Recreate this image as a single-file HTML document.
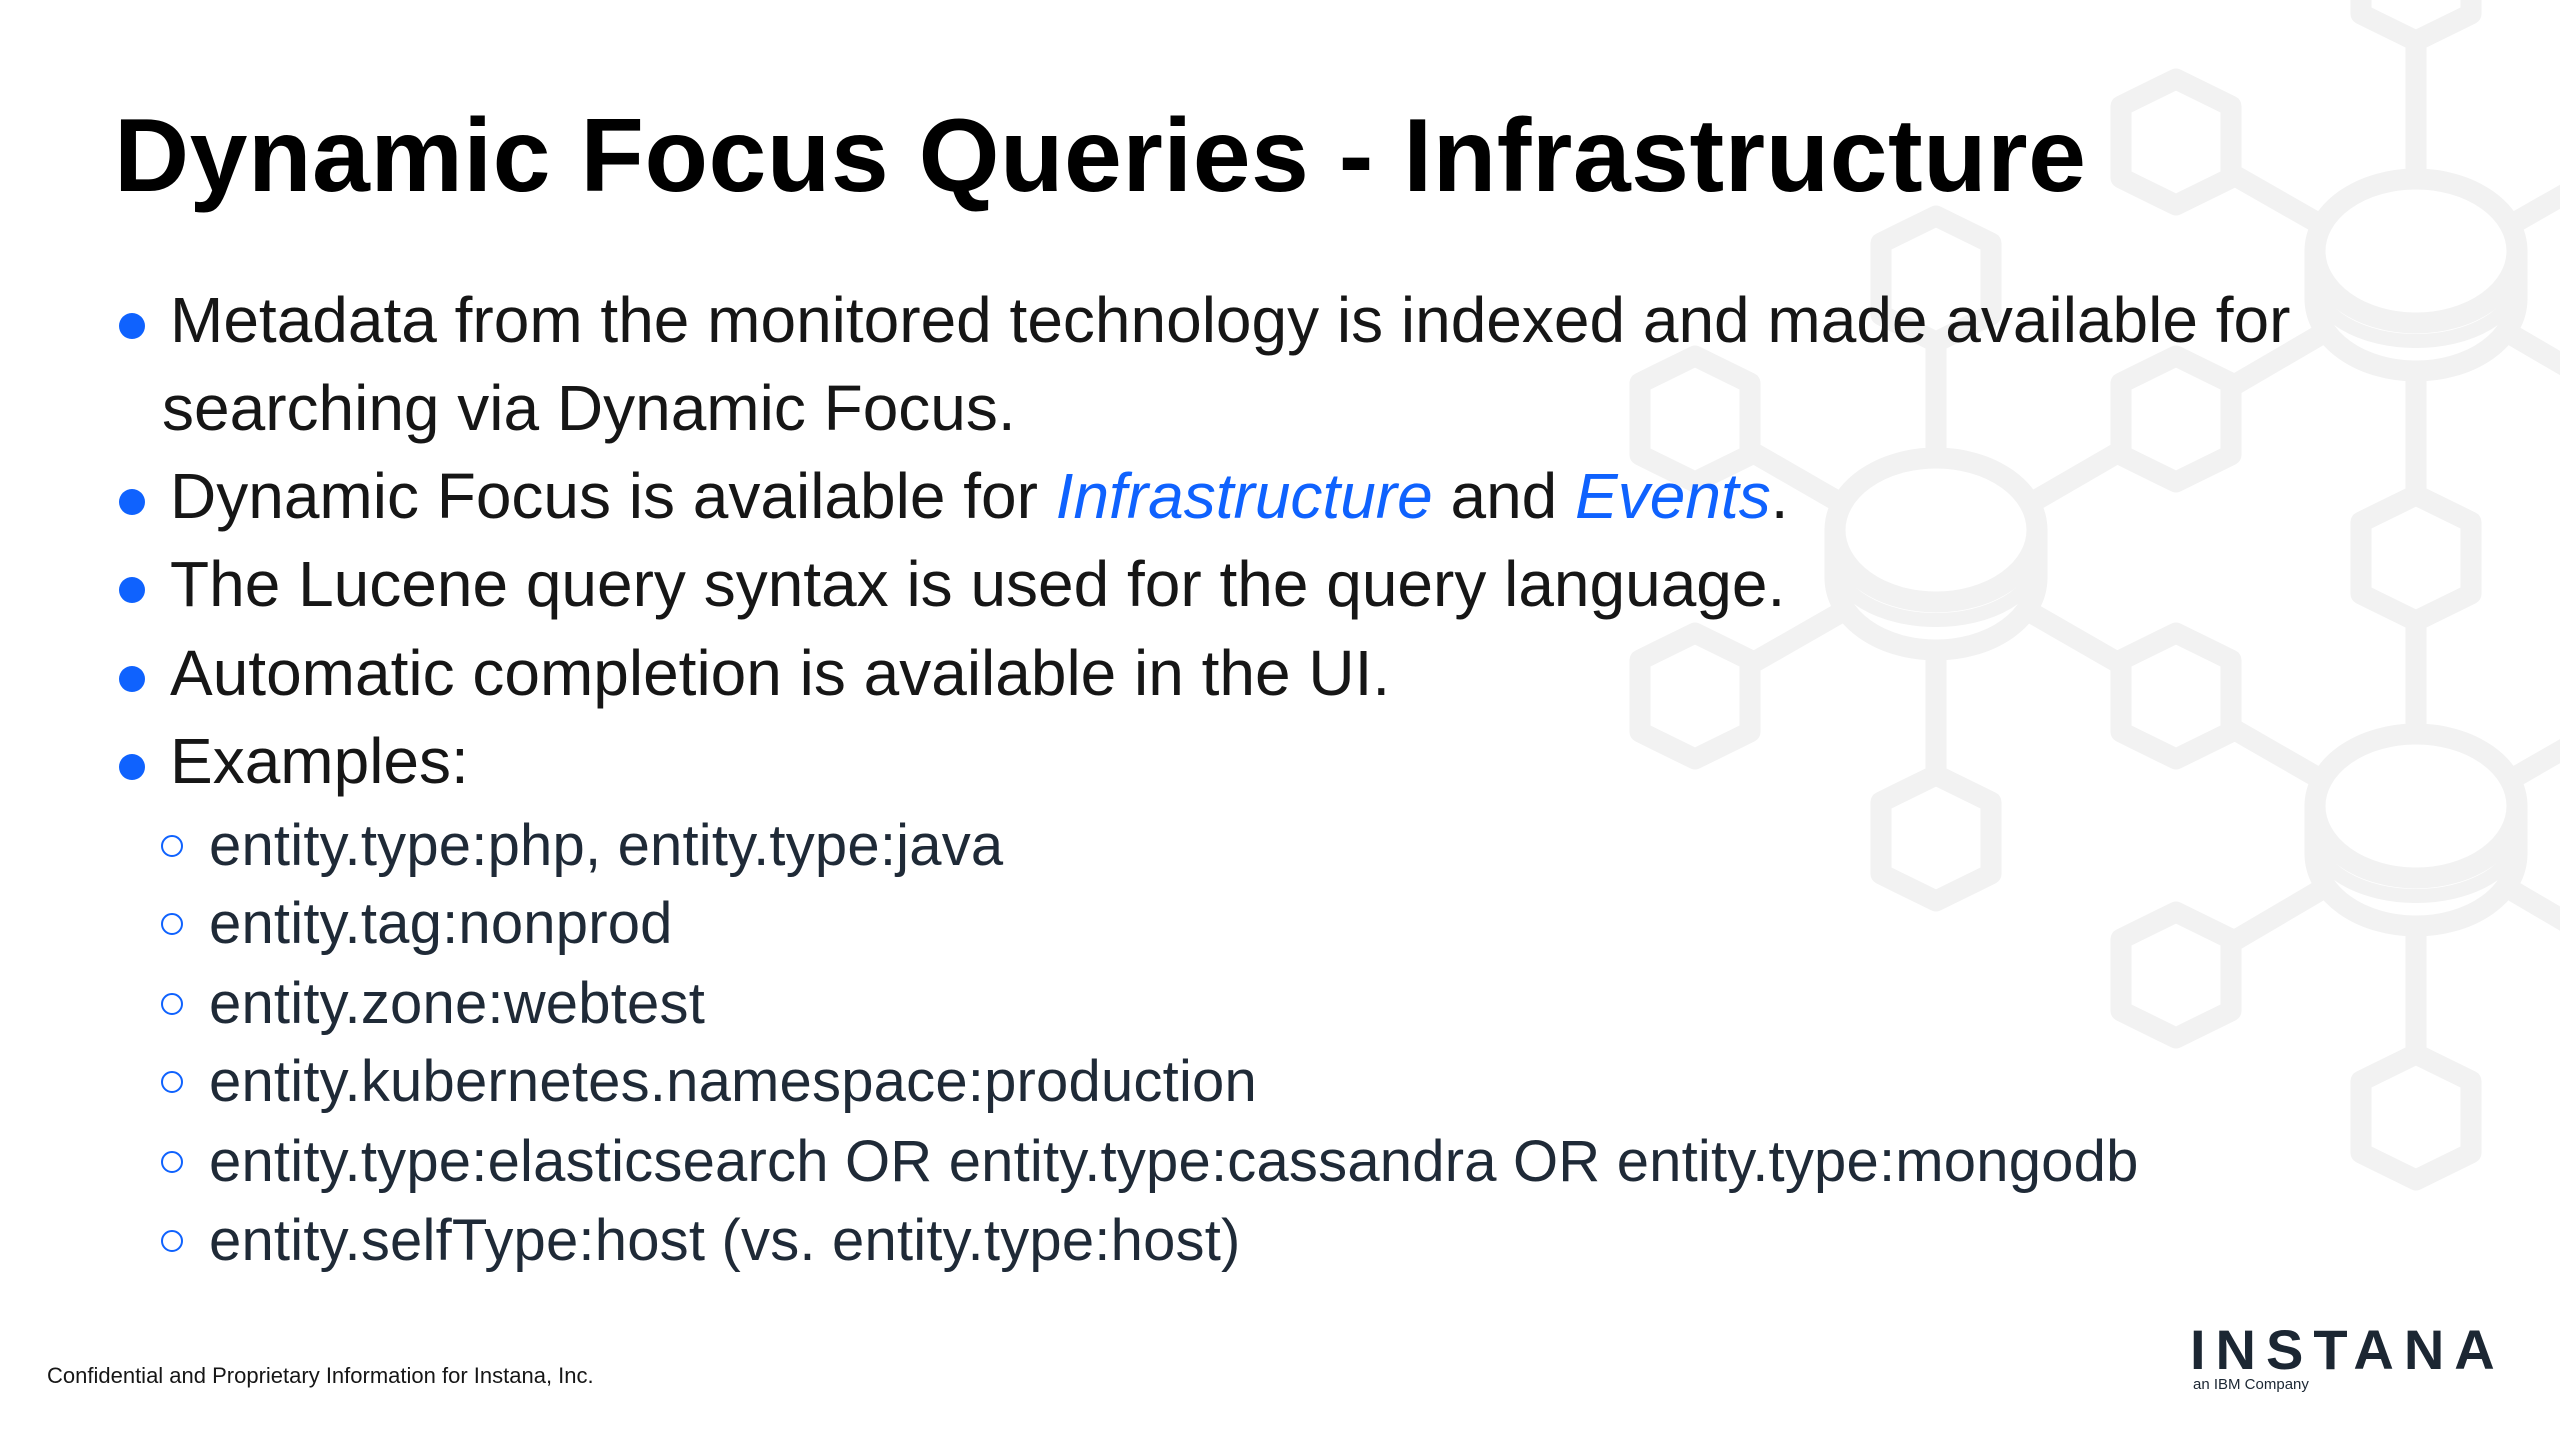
<!DOCTYPE html>
<html><head><meta charset="utf-8"><style>
html,body{margin:0;padding:0;}
body{width:2560px;height:1440px;position:relative;overflow:hidden;background:#fff;font-family:"Liberation Sans",sans-serif;}
.l{position:absolute;line-height:1;white-space:nowrap;}
.t{font-size:104px;font-weight:bold;color:#000;left:114px;top:104px;letter-spacing:0.5px}
.b{font-size:64px;color:#161616;left:170px}
.s{font-size:58px;color:#1f2a37;left:209px;letter-spacing:0.2px}
.dot{position:absolute;width:26px;height:26px;border-radius:50%;background:#0f62fe;left:119px}
.ring{position:absolute;width:18px;height:18px;border-radius:50%;border:2.5px solid #0f62fe;left:161px}
em{color:#0f62fe}
</style></head><body>
<svg style="position:absolute;left:0;top:0" width="2560" height="1440">
<g stroke="#f2f2f2" stroke-width="21" fill="#fff" stroke-linejoin="round" stroke-linecap="round">
<g fill="none">
<line x1="1936" y1="558" x2="1936" y2="279"/><line x1="1936" y1="558" x2="1936" y2="838"/>
<line x1="1936" y1="558" x2="1695" y2="419"/><line x1="1936" y1="558" x2="1695" y2="696"/>
<line x1="1936" y1="558" x2="2176" y2="419"/><line x1="1936" y1="558" x2="2176" y2="696"/>
<line x1="2416" y1="279" x2="2416" y2="11"/><line x1="2416" y1="279" x2="2416" y2="558"/>
<line x1="2416" y1="279" x2="2176" y2="142"/><line x1="2416" y1="279" x2="2176" y2="419"/>
<line x1="2416" y1="279" x2="2656" y2="142"/><line x1="2416" y1="279" x2="2656" y2="419"/>
<line x1="2416" y1="834" x2="2416" y2="558"/><line x1="2416" y1="834" x2="2416" y2="1117"/>
<line x1="2416" y1="834" x2="2176" y2="696"/><line x1="2416" y1="834" x2="2176" y2="975"/>
<line x1="2416" y1="834" x2="2656" y2="696"/><line x1="2416" y1="834" x2="2656" y2="975"/>
</g>
<polygon points="0,-63 55,-36 55,36 0,63 -55,36 -55,-36" transform="translate(2176,142)"/>
<polygon points="0,-63 55,-36 55,36 0,63 -55,36 -55,-36" transform="translate(1936,279)"/>
<polygon points="0,-63 55,-36 55,36 0,63 -55,36 -55,-36" transform="translate(1695,419)"/>
<polygon points="0,-63 55,-36 55,36 0,63 -55,36 -55,-36" transform="translate(2176,419)"/>
<polygon points="0,-63 55,-36 55,36 0,63 -55,36 -55,-36" transform="translate(2416,558)"/>
<polygon points="0,-63 55,-36 55,36 0,63 -55,36 -55,-36" transform="translate(1695,696)"/>
<polygon points="0,-63 55,-36 55,36 0,63 -55,36 -55,-36" transform="translate(2176,696)"/>
<polygon points="0,-63 55,-36 55,36 0,63 -55,36 -55,-36" transform="translate(1936,838)"/>
<polygon points="0,-63 55,-36 55,36 0,63 -55,36 -55,-36" transform="translate(2176,975)"/>
<polygon points="0,-63 55,-36 55,36 0,63 -55,36 -55,-36" transform="translate(2416,1117)"/>
<polygon points="0,-63 55,-36 55,36 0,63 -55,36 -55,-36" transform="translate(2416,-22)"/>
<g transform="translate(1936,530)">
<path d="M-101,0 L-101,48 A101,72 0 0 0 101,48 L101,0 Z"/>
<path d="M-101,30 A101,60 0 0 0 101,30" fill="none" stroke-width="14"/>
<ellipse cx="0" cy="0" rx="101" ry="72"/>
</g>
<g transform="translate(2416,251)">
<path d="M-101,0 L-101,48 A101,72 0 0 0 101,48 L101,0 Z"/>
<path d="M-101,30 A101,60 0 0 0 101,30" fill="none" stroke-width="14"/>
<ellipse cx="0" cy="0" rx="101" ry="72"/>
</g>
<g transform="translate(2416,806)">
<path d="M-101,0 L-101,48 A101,72 0 0 0 101,48 L101,0 Z"/>
<path d="M-101,30 A101,60 0 0 0 101,30" fill="none" stroke-width="14"/>
<ellipse cx="0" cy="0" rx="101" ry="72"/>
</g>
</g>
</svg>

<div class="l t">Dynamic Focus Queries - Infrastructure</div>

<div class="dot" style="top:313px"></div>
<div class="l b" style="top:288px">Metadata from the monitored technology is indexed and made available for</div>
<div class="l b" style="top:376px;left:162px">searching via Dynamic Focus.</div>
<div class="dot" style="top:489px"></div>
<div class="l b" style="top:464px">Dynamic Focus is available for <em>Infrastructure</em> and <em>Events</em>.</div>
<div class="dot" style="top:577px"></div>
<div class="l b" style="top:552px">The Lucene query syntax is used for the query language.</div>
<div class="dot" style="top:666px"></div>
<div class="l b" style="top:641px">Automatic completion is available in the UI.</div>
<div class="dot" style="top:754px"></div>
<div class="l b" style="top:729px">Examples:</div>

<div class="ring" style="top:835px"></div>
<div class="l s" style="top:817px">entity.type:php, entity.type:java</div>
<div class="ring" style="top:913px"></div>
<div class="l s" style="top:895px">entity.tag:nonprod</div>
<div class="ring" style="top:993px"></div>
<div class="l s" style="top:975px">entity.zone:webtest</div>
<div class="ring" style="top:1071px"></div>
<div class="l s" style="top:1053px">entity.kubernetes.namespace:production</div>
<div class="ring" style="top:1151px"></div>
<div class="l s" style="top:1133px">entity.type:elasticsearch OR entity.type:cassandra OR entity.type:mongodb</div>
<div class="ring" style="top:1230px"></div>
<div class="l s" style="top:1212px">entity.selfType:host (vs. entity.type:host)</div>

<div class="l" style="left:47px;top:1365px;font-size:22px;color:#161616">Confidential and Proprietary Information for Instana, Inc.</div>
<div class="l" style="left:2190px;top:1322px;font-size:56px;font-weight:bold;color:#1c2733;letter-spacing:10px">INSTANA</div>
<div class="l" style="left:2193px;top:1377px;font-size:15px;color:#1c2733">an IBM Company</div>
</body></html>
